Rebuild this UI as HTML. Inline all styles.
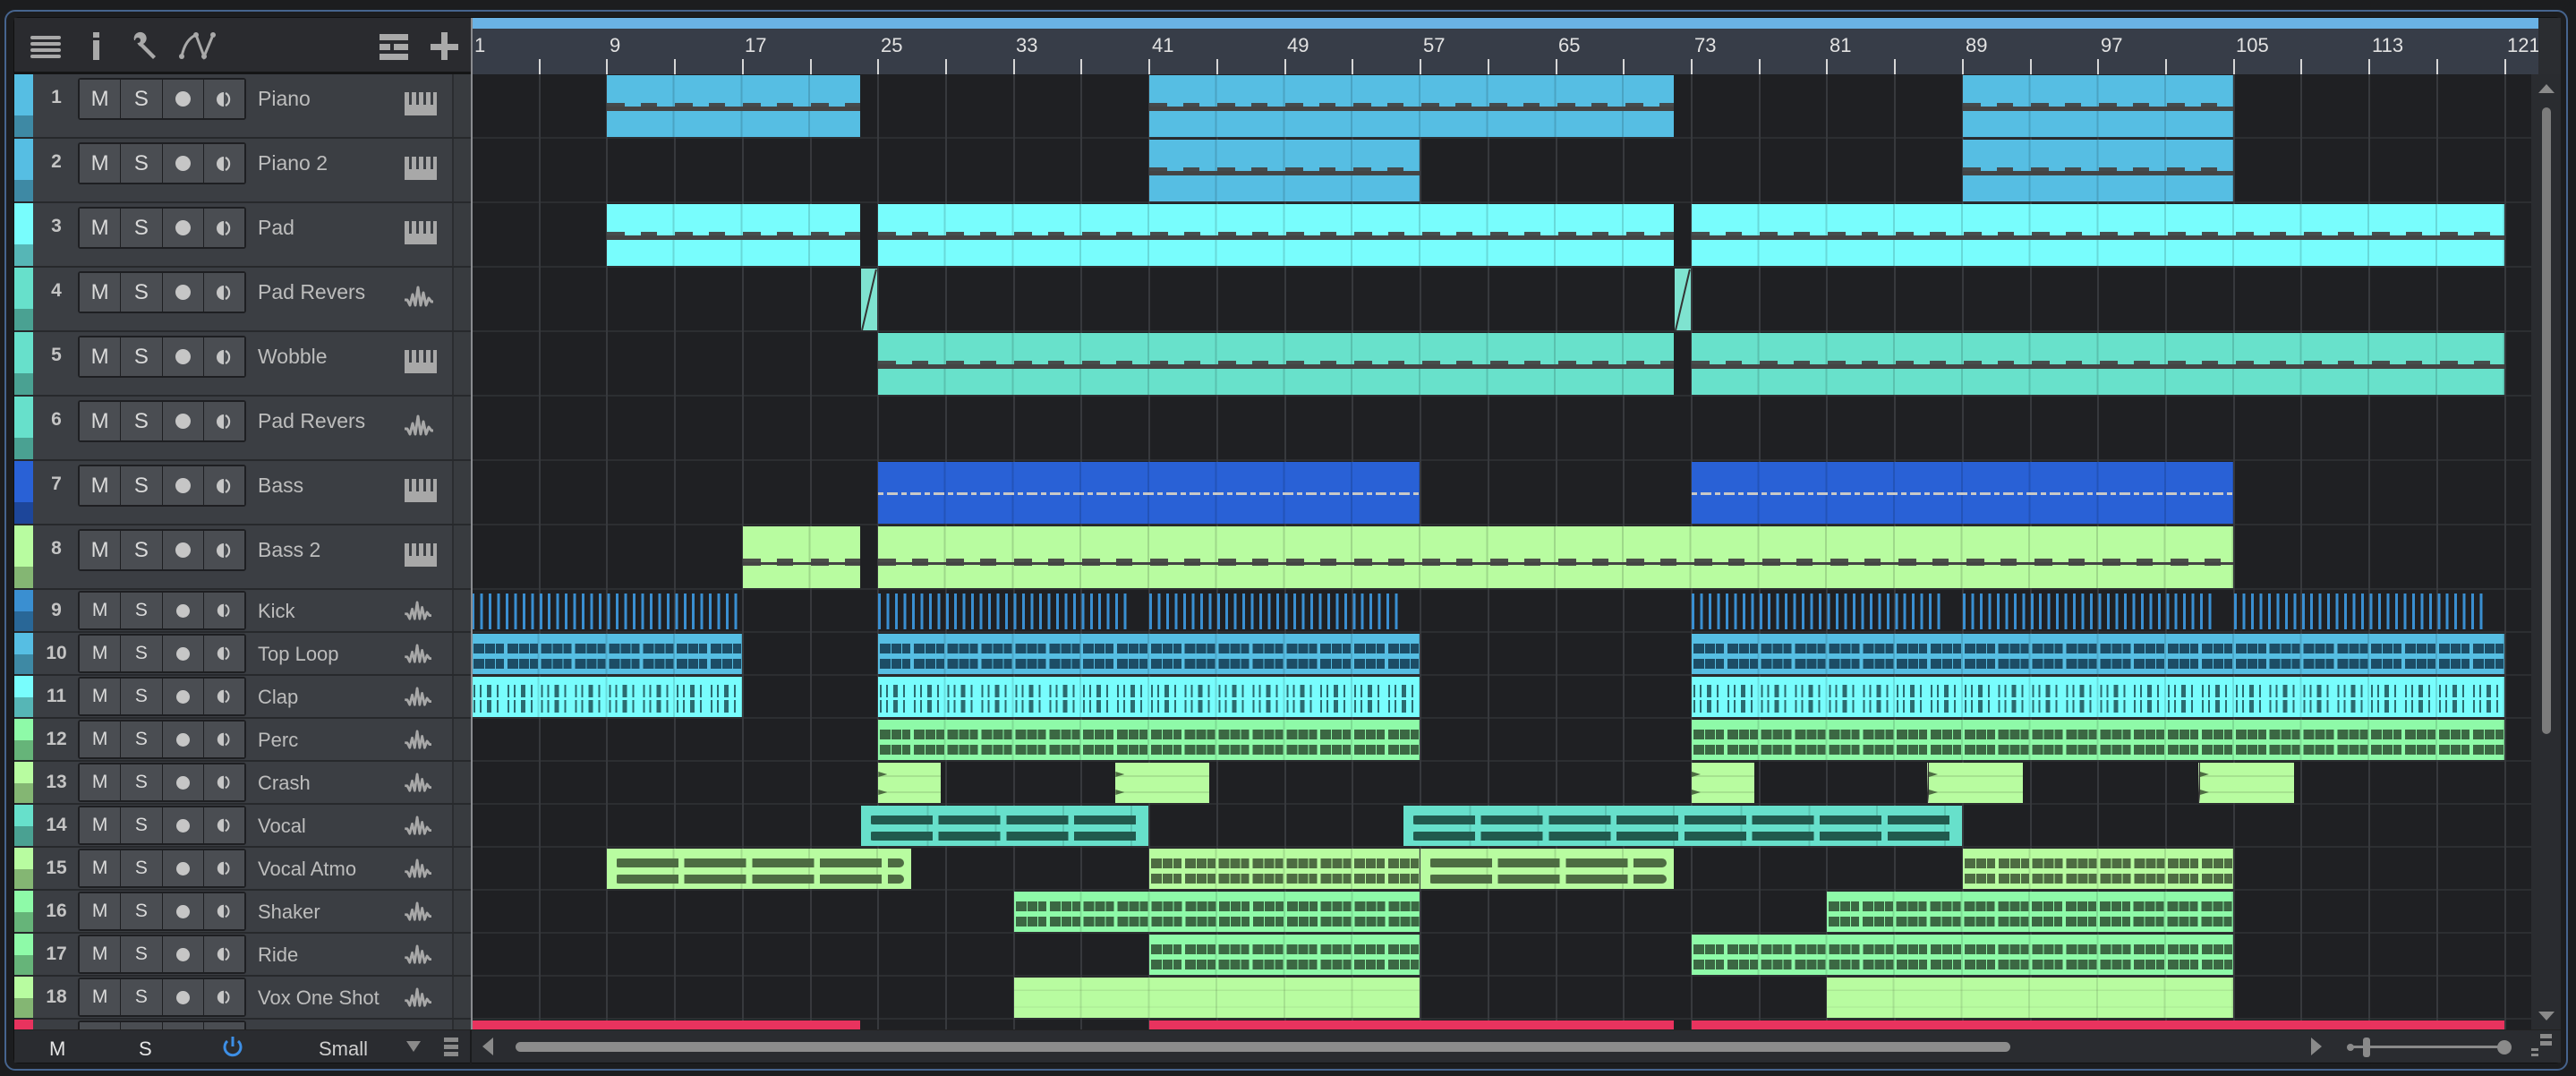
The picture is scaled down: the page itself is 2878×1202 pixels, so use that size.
<!DOCTYPE html>
<html><head><meta charset="utf-8">
<style>
*{box-sizing:border-box;margin:0;padding:0}
html,body{width:2878px;height:1202px;overflow:hidden;background:#1c1d1f;font-family:"Liberation Sans",sans-serif}
.abs{position:absolute}
#frame{position:absolute;left:5px;top:11px;width:2864px;height:1185px;border:2px solid #46648e;border-radius:12px;background:#1c1d1f}
#panel{position:absolute;left:15px;top:19px;width:2846px;height:1169px;background:#2a2c30;border-radius:6px;overflow:hidden;border:1px solid #111}
#tb{left:16px;top:20px;width:510px;height:60px;background:#2a2b2f}
#tbline{left:16px;top:80px;width:510px;height:3px;background:#141516}
#list{left:16px;top:83px;width:510px;height:1067px;background:#34373b;overflow:hidden}
.tr{position:absolute;left:0;width:510px;background:#3b3e43;border-bottom:2px solid #27292c}
.cs{position:absolute;left:0;top:0;width:21px;bottom:0}
.cs i{position:absolute;left:0;right:0;bottom:0;background:rgba(0,0,0,.28)}
.cs i:after{content:"";position:absolute;left:3px;top:50%;width:14px;height:10px;margin-top:-5px;background:none;border:0}
.n{position:absolute;left:30px;width:34px;text-align:center;color:#c4c4c4;font-weight:bold;font-size:21px}
.b{position:absolute;left:71px;width:188px;display:flex;border:2px solid #1e1f22;border-radius:3px;background:#1e1f22}
.b span{flex:1;background:#4a4d52;margin-right:1px;color:#dadada;display:flex;align-items:center;justify-content:center;font-size:24px}
.b span:last-child{margin-right:0}
.dot{width:17px;height:17px;border-radius:50%;background:#c6c6c6}
.nm{position:absolute;left:272px;color:#bdbdbd;font-size:23px;white-space:nowrap}
.ic{position:absolute;left:436px}
.col{position:absolute;left:489px;top:0;bottom:0;width:21px;border-left:2px solid #2b2d30;background:#383b3f}
.tt{height:72px}.tt .n,.tt .nm{top:14px}.tt .b{top:4px;height:47px}.tt .cs i{height:24px}.tt .ic{top:20px}
.ts{height:48px}.ts .n,.ts .nm{top:11px}.ts .nm{font-size:22px}.ts .b{top:1px;height:44px}.ts .cs i{height:22px}.ts .ic{top:12px}
.ts .b span{font-size:21px}.ts .dot{width:15px;height:15px}
#ruler{left:527px;top:20px;width:2309px;height:63px;background:#373d48;overflow:hidden}
#loop{left:527px;top:20px;width:2309px;height:12px;background:#6ab2e5}
.lab{position:absolute;top:18px;color:#e2e2e2;font-size:22px}
.tick{position:absolute;top:46px;width:2px;height:17px;background:#d6d6d6}
#arr{left:527px;top:83px;width:2301px;height:1067px;background:#1f2023;overflow:hidden}
.clip{position:absolute;overflow:hidden}
#vs{left:2828px;top:83px;width:33px;height:1067px;background:#2a2c30}
#bb{left:16px;top:1150px;width:2845px;height:37px;background:#2a2c30;border-top:1px solid #222}
.bt{position:absolute;top:8px;font-size:22px;color:#e6e6e6}
</style></head><body>
<div id="frame"></div>
<div id="panel"></div>

<!-- toolbar -->
<div id="tb" class="abs">
<svg class="abs" style="left:0;top:0" width="510" height="60">
<g fill="#a9a9a9">
<rect x="18" y="20" width="34" height="4" rx="2"/><rect x="18" y="27" width="34" height="4" rx="2"/><rect x="18" y="34" width="34" height="4" rx="2"/><rect x="18" y="41" width="34" height="4" rx="2"/>
<rect x="88" y="16" width="7" height="6"/><rect x="88" y="25" width="7" height="22"/>
<rect x="408" y="18" width="32" height="7"/><rect x="408" y="29" width="12" height="7"/><rect x="424" y="29" width="16" height="7"/><rect x="408" y="40" width="32" height="7"/>
<rect x="465" y="29" width="31" height="7"/><rect x="477" y="16" width="7" height="31"/>
</g>
<path d="M134 25 a7 7 0 1 1 10 4 l14 14 -3 3 -14 -14 a7 7 0 0 1 -4 -7z" fill="#a9a9a9"/>
<circle cx="138" cy="25" r="3" fill="#2a2b2f"/>
<g stroke="#a9a9a9" stroke-width="3" fill="none"><path d="M187 43 Q191 24 203 19"/><path d="M203 19 L212 43 L222 19"/></g>
<g fill="#a9a9a9"><circle cx="187" cy="43" r="3"/><circle cx="203" cy="19" r="3"/><circle cx="212" cy="43" r="3"/><circle cx="222" cy="19" r="3"/></g>
</svg>
</div>
<div id="tbline" class="abs"></div>

<svg width="0" height="0" style="position:absolute">
<symbol id="kb" viewBox="0 0 36 26"><path d="M0 0h5v14h3V0h5v14h3V0h5v14h3V0h5v14h3V0h4v26H0z" fill="#a8a8a8"/></symbol>
<symbol id="wv" viewBox="0 0 32 26"><path d="M0 16h3l3 6 3-12 3 12 3-20 3 20 3-14 3 14 3-8 3 4h3" stroke="#a8a8a8" stroke-width="3" fill="none" stroke-linejoin="round"/></symbol>
<symbol id="mon" viewBox="0 0 20 20"><path d="M10 2a8 8 0 0 0 0 16z" fill="#c6c6c6"/><path d="M12 3a8 8 0 0 1 0 14" stroke="#c6c6c6" stroke-width="2.2" fill="none"/></symbol>
<symbol id="au" viewBox="0 0 16 12"><path d="M1 10 L5 2 L8 9 L11 3 L15 10" stroke="#cfe" stroke-width="1.2" fill="none" opacity=".6"/></symbol>
</svg>

<div id="list" class="abs">
<div class="tr tt" style="top:0"><div class="cs" style="background:#56bee3"><i></i></div><span class="n">1</span><div class="b"><span>M</span><span>S</span><span><i class="dot"></i></span><span><svg width="20" height="20"><use href="#mon"/></svg></span></div><span class="nm">Piano</span><svg class="ic" width="36" height="26"><use href="#kb"/></svg><div class="col"></div></div>
<div class="tr tt" style="top:72px"><div class="cs" style="background:#56bee3"><i></i></div><span class="n">2</span><div class="b"><span>M</span><span>S</span><span><i class="dot"></i></span><span><svg width="20" height="20"><use href="#mon"/></svg></span></div><span class="nm">Piano 2</span><svg class="ic" width="36" height="26"><use href="#kb"/></svg><div class="col"></div></div>
<div class="tr tt" style="top:144px"><div class="cs" style="background:#78fdfd"><i></i></div><span class="n">3</span><div class="b"><span>M</span><span>S</span><span><i class="dot"></i></span><span><svg width="20" height="20"><use href="#mon"/></svg></span></div><span class="nm">Pad</span><svg class="ic" width="36" height="26"><use href="#kb"/></svg><div class="col"></div></div>
<div class="tr tt" style="top:216px"><div class="cs" style="background:#67e0cb"><i></i></div><span class="n">4</span><div class="b"><span>M</span><span>S</span><span><i class="dot"></i></span><span><svg width="20" height="20"><use href="#mon"/></svg></span></div><span class="nm">Pad Revers</span><svg class="ic" width="32" height="26"><use href="#wv"/></svg><div class="col"></div></div>
<div class="tr tt" style="top:288px"><div class="cs" style="background:#67e0cb"><i></i></div><span class="n">5</span><div class="b"><span>M</span><span>S</span><span><i class="dot"></i></span><span><svg width="20" height="20"><use href="#mon"/></svg></span></div><span class="nm">Wobble</span><svg class="ic" width="36" height="26"><use href="#kb"/></svg><div class="col"></div></div>
<div class="tr tt" style="top:360px"><div class="cs" style="background:#67e0cb"><i></i></div><span class="n">6</span><div class="b"><span>M</span><span>S</span><span><i class="dot"></i></span><span><svg width="20" height="20"><use href="#mon"/></svg></span></div><span class="nm">Pad Revers</span><svg class="ic" width="32" height="26"><use href="#wv"/></svg><div class="col"></div></div>
<div class="tr tt" style="top:432px"><div class="cs" style="background:#2961d6"><i></i></div><span class="n">7</span><div class="b"><span>M</span><span>S</span><span><i class="dot"></i></span><span><svg width="20" height="20"><use href="#mon"/></svg></span></div><span class="nm">Bass</span><svg class="ic" width="36" height="26"><use href="#kb"/></svg><div class="col"></div></div>
<div class="tr tt" style="top:504px"><div class="cs" style="background:#b8fca0"><i></i></div><span class="n">8</span><div class="b"><span>M</span><span>S</span><span><i class="dot"></i></span><span><svg width="20" height="20"><use href="#mon"/></svg></span></div><span class="nm">Bass 2</span><svg class="ic" width="36" height="26"><use href="#kb"/></svg><div class="col"></div></div>
<div class="tr ts" style="top:576px"><div class="cs" style="background:#3a8fd1"><i></i></div><span class="n">9</span><div class="b"><span>M</span><span>S</span><span><i class="dot"></i></span><span><svg width="18" height="18"><use href="#mon"/></svg></span></div><span class="nm">Kick</span><svg class="ic" width="30" height="24"><use href="#wv"/></svg><div class="col"></div></div>
<div class="tr ts" style="top:624px"><div class="cs" style="background:#56bee3"><i></i></div><span class="n">10</span><div class="b"><span>M</span><span>S</span><span><i class="dot"></i></span><span><svg width="18" height="18"><use href="#mon"/></svg></span></div><span class="nm">Top Loop</span><svg class="ic" width="30" height="24"><use href="#wv"/></svg><div class="col"></div></div>
<div class="tr ts" style="top:672px"><div class="cs" style="background:#78fdfd"><i></i></div><span class="n">11</span><div class="b"><span>M</span><span>S</span><span><i class="dot"></i></span><span><svg width="18" height="18"><use href="#mon"/></svg></span></div><span class="nm">Clap</span><svg class="ic" width="30" height="24"><use href="#wv"/></svg><div class="col"></div></div>
<div class="tr ts" style="top:720px"><div class="cs" style="background:#8efaa8"><i></i></div><span class="n">12</span><div class="b"><span>M</span><span>S</span><span><i class="dot"></i></span><span><svg width="18" height="18"><use href="#mon"/></svg></span></div><span class="nm">Perc</span><svg class="ic" width="30" height="24"><use href="#wv"/></svg><div class="col"></div></div>
<div class="tr ts" style="top:768px"><div class="cs" style="background:#b8fca0"><i></i></div><span class="n">13</span><div class="b"><span>M</span><span>S</span><span><i class="dot"></i></span><span><svg width="18" height="18"><use href="#mon"/></svg></span></div><span class="nm">Crash</span><svg class="ic" width="30" height="24"><use href="#wv"/></svg><div class="col"></div></div>
<div class="tr ts" style="top:816px"><div class="cs" style="background:#67e0cb"><i></i></div><span class="n">14</span><div class="b"><span>M</span><span>S</span><span><i class="dot"></i></span><span><svg width="18" height="18"><use href="#mon"/></svg></span></div><span class="nm">Vocal</span><svg class="ic" width="30" height="24"><use href="#wv"/></svg><div class="col"></div></div>
<div class="tr ts" style="top:864px"><div class="cs" style="background:#b8fca0"><i></i></div><span class="n">15</span><div class="b"><span>M</span><span>S</span><span><i class="dot"></i></span><span><svg width="18" height="18"><use href="#mon"/></svg></span></div><span class="nm">Vocal Atmo</span><svg class="ic" width="30" height="24"><use href="#wv"/></svg><div class="col"></div></div>
<div class="tr ts" style="top:912px"><div class="cs" style="background:#8efaa8"><i></i></div><span class="n">16</span><div class="b"><span>M</span><span>S</span><span><i class="dot"></i></span><span><svg width="18" height="18"><use href="#mon"/></svg></span></div><span class="nm">Shaker</span><svg class="ic" width="30" height="24"><use href="#wv"/></svg><div class="col"></div></div>
<div class="tr ts" style="top:960px"><div class="cs" style="background:#8efaa8"><i></i></div><span class="n">17</span><div class="b"><span>M</span><span>S</span><span><i class="dot"></i></span><span><svg width="18" height="18"><use href="#mon"/></svg></span></div><span class="nm">Ride</span><svg class="ic" width="30" height="24"><use href="#wv"/></svg><div class="col"></div></div>
<div class="tr ts" style="top:1008px"><div class="cs" style="background:#b8fca0"><i></i></div><span class="n">18</span><div class="b"><span>M</span><span>S</span><span><i class="dot"></i></span><span><svg width="18" height="18"><use href="#mon"/></svg></span></div><span class="nm">Vox One Shot</span><svg class="ic" width="30" height="24"><use href="#wv"/></svg><div class="col"></div></div>
<div class="tr ts" style="top:1056px"><div class="cs" style="background:#e8335e"></div><div class="b"><span></span><span></span><span></span><span></span></div><div class="col"></div></div>
</div>

<div id="ruler" class="abs">
<span class="lab" style="left:3px">1</span><span class="lab" style="left:154px">9</span><span class="lab" style="left:305px">17</span><span class="lab" style="left:457px">25</span><span class="lab" style="left:608px">33</span><span class="lab" style="left:760px">41</span><span class="lab" style="left:911px">49</span><span class="lab" style="left:1063px">57</span><span class="lab" style="left:1214px">65</span><span class="lab" style="left:1366px">73</span><span class="lab" style="left:1517px">81</span><span class="lab" style="left:1669px">89</span><span class="lab" style="left:1820px">97</span><span class="lab" style="left:1971px">105</span><span class="lab" style="left:2123px">113</span><span class="lab" style="left:2274px">121</span>
<div id="ticks"></div>
</div>
<div id="loop" class="abs"></div>
<div class="abs" style="left:2836px;top:20px;width:25px;height:63px;background:#2b2d31"></div>

<div id="arr" class="abs"></div>
<div class="abs" style="left:526px;top:20px;width:2px;height:1130px;background:#8a8c90"></div>

<div id="vs" class="abs">
<svg class="abs" style="left:8px;top:10px" width="18" height="12"><path d="M0 11 L9 1 L18 11z" fill="#8a8a8a"/></svg>
<div class="abs" style="left:12px;top:37px;width:10px;height:700px;border-radius:5px;background:#7c7c7c"></div>
<svg class="abs" style="left:8px;top:1046px" width="18" height="12"><path d="M0 1 L9 11 L18 1z" fill="#8a8a8a"/></svg>
</div>

<div id="bb" class="abs">
<span class="bt" style="left:39px">M</span>
<span class="bt" style="left:139px">S</span>
<svg class="abs" style="left:232px;top:6px" width="24" height="24"><path d="M6 6 A9 9 0 1 0 18 6" stroke="#3d8fe6" stroke-width="3" fill="none"/><rect x="10.5" y="1" width="3" height="11" fill="#3d8fe6"/></svg>
<span class="bt" style="left:340px;color:#cfcfcf">Small</span>
<svg class="abs" style="left:438px;top:12px" width="16" height="12"><path d="M0 0 H16 L8 12z" fill="#8a8a8a"/></svg>
<svg class="abs" style="left:480px;top:8px" width="16" height="22" fill="#8a8a8a"><rect y="0" width="16" height="5"/><rect y="8" width="16" height="5"/><rect y="16" width="16" height="5"/></svg>
<div class="abs" style="left:509px;top:0;width:2px;height:37px;background:#1a1b1d"></div>
<svg class="abs" style="left:523px;top:8px" width="12" height="20"><path d="M12 0 V20 L0 10z" fill="#8a8a8a"/></svg>
<div class="abs" style="left:560px;top:13px;width:1670px;height:11px;border-radius:6px;background:#8c8c8c"></div>
<svg class="abs" style="left:2566px;top:8px" width="12" height="20"><path d="M0 0 V20 L12 10z" fill="#8a8a8a"/></svg>
<svg class="abs" style="left:2600px;top:4px" width="200" height="30"><circle cx="10" cy="15" r="4" fill="#8a8a8a"/><rect x="10" y="13" width="176" height="3" fill="#8a8a8a"/><rect x="24" y="4" width="8" height="22" rx="3" fill="#8a8a8a"/><circle cx="182" cy="15" r="8" fill="#8a8a8a"/></svg>
<svg class="abs" style="left:2812px;top:2px" width="24" height="32" fill="#8a8a8a"><rect x="10" y="2" width="13" height="5"/><rect x="10" y="10" width="13" height="5"/><rect x="0" y="18" width="8" height="3"/><rect x="0" y="24" width="8" height="3"/></svg>
</div>

<script>
var B=18.93;function X(b){return (b-1)*B;}
var tk=document.getElementById('ticks'),h='';
for(var b=5;b<=121;b+=4){h+='<div class="tick" style="left:'+(X(b)-1)+'px"></div>';}
tk.innerHTML=h;
var A=document.getElementById('arr'),s='';
var rows=[];for(var i=0;i<8;i++)rows.push([i*72,72]);for(i=0;i<11;i++)rows.push([576+i*48,48]);
// grid
for(i=0;i<19;i++){s+='<div class="abs" style="left:0;top:'+(rows[i][0]+rows[i][1]-2)+'px;width:2301px;height:2px;background:#2c2e31"></div>';}
for(b=5;b<=121;b+=4){s+='<div class="abs" style="left:'+(X(b)-1)+'px;top:0;width:2px;height:1067px;background:#37393d"></div>';}
var col=['#56bee3','#56bee3','#78fdfd','#67e0cb','#68e1cb','#67e0cb','#2961d6','#b8fca0','#3a8fd1','#56bee3','#78fdfd','#8efaa8','#b8fca0','#67e0cb','#b8fca0','#8efaa8','#8efaa8','#b8fca0','#e8335e'];
var wc={'#56bee3':'#1c4d66','#78fdfd':'#2b6b70','#8efaa8':'#3b6843','#b8fca0':'#4d6c42','#67e0cb':'#215a4e','#e8335e':'#9a1f3c'};
var C=[
[0,9,24,'m'],[0,41,72,'m'],[0,89,105,'m'],
[1,41,57,'m'],[1,89,105,'m'],
[2,9,24,'m'],[2,25,72,'m'],[2,73,121,'m'],
[3,24,25,'f'],[3,72,73,'f'],
[4,25,72,'m'],[4,73,121,'m'],
[6,25,57,'d'],[6,73,105,'d'],
[7,17,24,'m2'],[7,25,105,'m2'],
[8,1,17,'k'],[8,25,39.75,'k'],[8,41,55.75,'k'],[8,73,87.75,'k'],[8,89,103.75,'k'],[8,105,119.75,'k'],
[9,1,17,'a'],[9,25,57,'a'],[9,73,121,'a'],
[10,1,17,'c'],[10,25,57,'c'],[10,73,121,'c'],
[11,25,57,'a'],[11,73,121,'a'],
[12,25,28.75,'x'],[12,39,44.6,'xf'],[12,73,76.75,'x'],[12,86.9,92.6,'xf'],[12,102.9,108.6,'xf'],
[13,24,41,'v'],[13,56,89,'v'],
[14,9,27,'v'],[14,41,57,'a'],[14,57,72,'v'],[14,89,105,'a'],
[15,33,57,'a'],[15,81,105,'a'],
[16,41,57,'a'],[16,73,105,'a'],
[17,33,57,'p'],[17,81,105,'p'],
[18,1,24,'r'],[18,41,72,'r'],[18,73,121,'r']];
function bars(w,c){return 'repeating-linear-gradient(90deg,transparent 0 '+(4*B-2)+'px,'+c+' '+(4*B-2)+'px '+(4*B)+'px)';}
C.forEach(function(c){
 var r=rows[c[0]],cl=col[c[0]],t=c[3],l=X(c[1]),w=X(c[2])-l-1,top=r[0]+1,hh=r[1]-3,bg=cl,inner='';
 var wcol=wc[cl]||'#333',gl=bars(w,'rgba(0,0,0,.14)');
 if(t=='m'||t=='m2'){
  var y=Math.round(hh*(t=='m2'?0.58:0.5));
  inner='<div class="abs" style="left:0;right:0;top:'+(y-4)+'px;height:8px;background:repeating-linear-gradient(90deg,#444 0 20px,transparent 20px 38px,#444 38px 56px,transparent 56px 76px);opacity:.95"></div><div class="abs" style="left:0;right:0;top:'+y+'px;height:'+(t=='m2'?3:5)+'px;background:#444"></div>';
  bg=gl+','+cl;
 }else if(t=='d'){
  inner='<div class="abs" style="left:0;right:0;top:'+(hh/2-1)+'px;height:3px;background:repeating-linear-gradient(90deg,#c8c8c8 0 6px,transparent 6px 10px,#c8c8c8 10px 22px,transparent 22px 26px)"></div>';
  bg=gl+','+cl;
 }else if(t=='k'){
  bg='repeating-linear-gradient(90deg,#3a8fd1 0 3px,transparent 3px 9.47px)';top+=3;hh-=5;
 }else if(t=='f'){
  inner='<svg class="abs" style="left:0;top:0" width="'+w+'" height="'+hh+'"><path d="M1 '+hh+' L'+(w-1)+' 1" stroke="#333" stroke-width="2"/></svg>';
  bg='#7fe3d0';
 }else if(t=='r'){
  bg=cl;
 }else if(t=='p'){
  bg=bars(w,'rgba(0,0,0,.1)')+',linear-gradient(transparent 0 30%,rgba(0,0,0,.08) 30% 33%,transparent 33% 72%,rgba(0,0,0,.08) 72% 75%,transparent 75%),'+cl;
 }else if(t=='x'||t=='xf'){
  bg=cl;
  inner='<div class="abs" style="left:0;right:0;top:30%;height:2px;background:rgba(0,0,0,.1)"></div><div class="abs" style="left:0;right:0;top:72%;height:2px;background:rgba(0,0,0,.1)"></div>';
  var off=0;
  if(t=='xf'){off=X(Math.ceil(c[1]))-l;inner+='<div class="abs" style="left:0;top:0;width:'+off+'px;height:'+hh+'px;background:rgba(255,255,255,.3)"></div><svg class="abs" style="left:0;top:0" width="'+off+'" height="'+hh+'"><path d="M0 '+hh+' Q'+(off*0.8)+' '+(hh*0.8)+' '+off+' 0" stroke="#333" stroke-width="2" fill="none"/></svg>';}
  inner+='<div class="abs" style="left:'+off+'px;top:10px;width:10px;height:6px;background:'+wcol+';clip-path:polygon(0 0,100% 50%,0 100%)"></div><div class="abs" style="left:'+off+'px;top:30px;width:10px;height:6px;background:'+wcol+';clip-path:polygon(0 0,100% 50%,0 100%)"></div>';
 }else{
  var h1=(t=='c')?'radial-gradient(ellipse 3px 8px,'+wcol+' 90%,transparent 100%)':null;
  var band;
  if(t=='c'){
   band='repeating-linear-gradient(90deg,transparent 0 2px,'+wcol+' 2px 4px,transparent 4px 9px,'+wcol+' 9px 11px,transparent 11px 17px,'+wcol+' 17px 22px,transparent 22px 28px,'+wcol+' 28px 30px,transparent 30px 37.86px)';
   inner='<div class="abs" style="left:0;right:0;top:9px;height:14px;background:'+band+'"></div><div class="abs" style="left:0;right:0;top:26px;height:14px;background:'+band+'"></div>';
  }else if(t=='v'){
   band='repeating-linear-gradient(90deg,transparent 0 3px,'+wcol+' 3px 72px,transparent 72px 75.7px)';
   inner='<div class="abs" style="left:8px;right:8px;top:11px;height:10px;background:'+band+';border-radius:5px"></div><div class="abs" style="left:8px;right:8px;top:29px;height:10px;background:'+band+';border-radius:5px"></div>';
  }else{
   band='repeating-linear-gradient(90deg,transparent 0 2px,'+wcol+' 2px 14px,transparent 14px 15px,'+wcol+' 15px 26px,transparent 26px 27px,'+wcol+' 27px 36px,transparent 36px 37.86px)';
   inner='<div class="abs" style="left:0;right:0;top:11px;height:11px;background:'+band+'"></div><div class="abs" style="left:0;right:0;top:28px;height:11px;background:'+band+'"></div>';
  }
  bg=bars(w,'rgba(0,0,0,.12)')+','+cl;
 }
 s+='<div class="clip" style="left:'+l+'px;top:'+top+'px;width:'+w+'px;height:'+hh+'px;background:'+bg+'">'+inner+'</div>';
});
A.innerHTML=s;
</script>
</body></html>
